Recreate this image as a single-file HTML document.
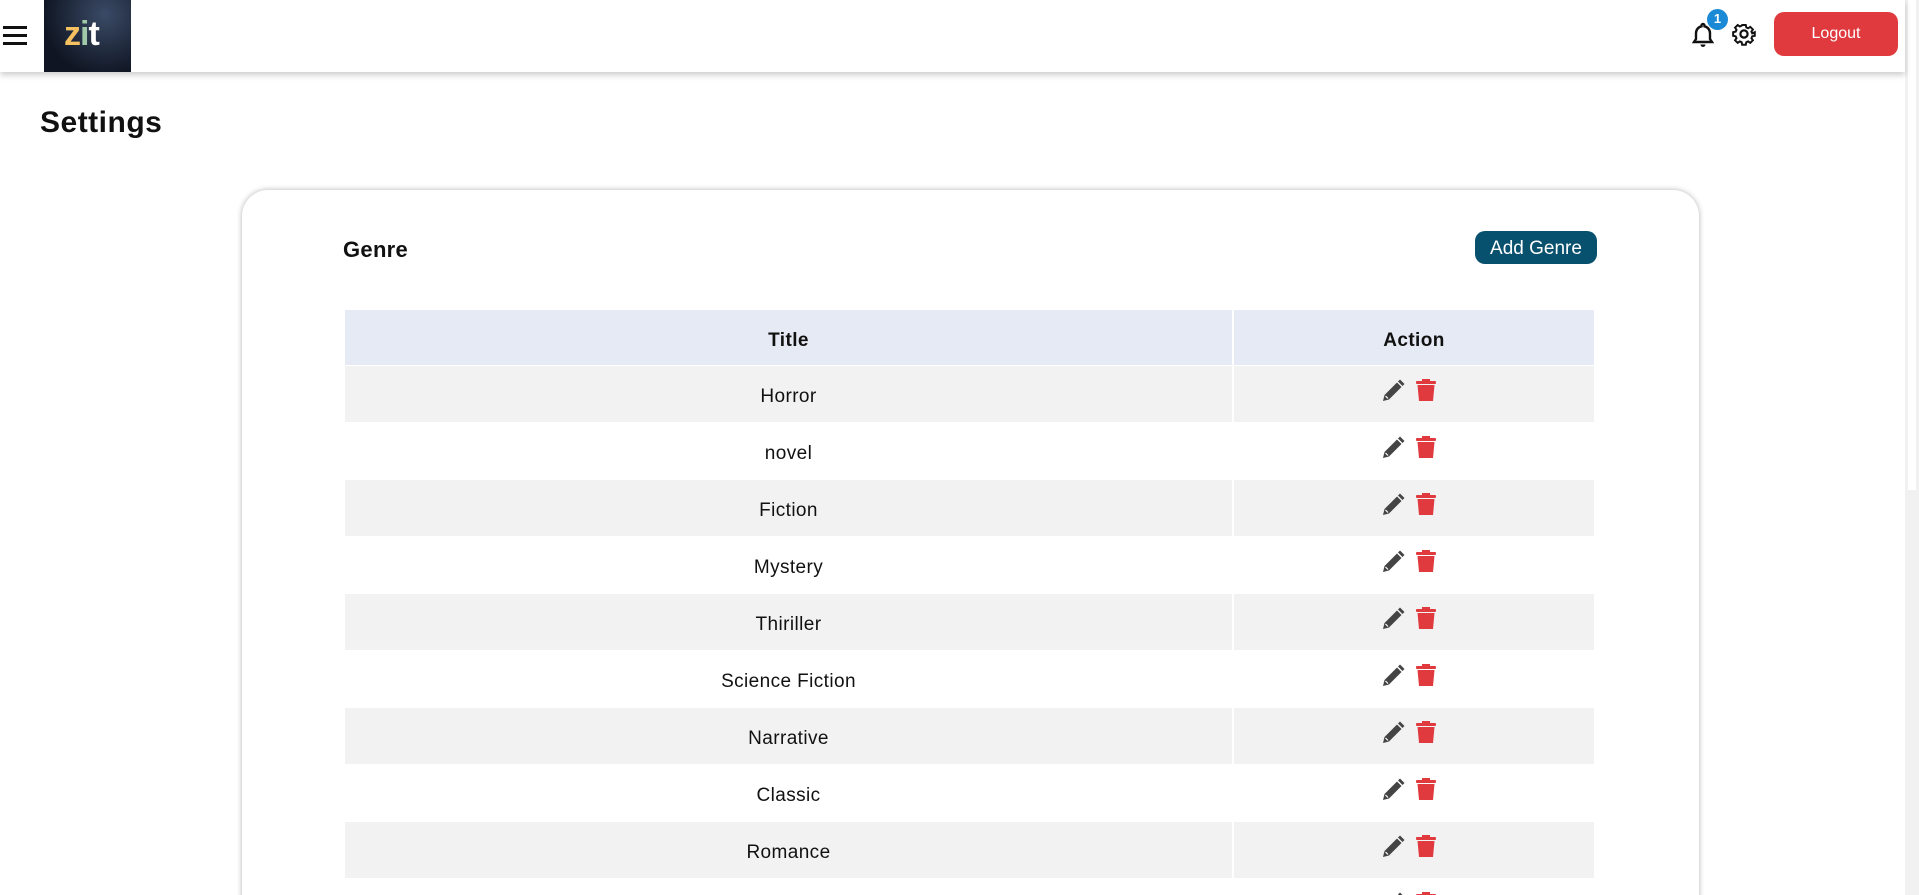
<!DOCTYPE html>
<html style="overflow:hidden;height:895px"><head><meta charset="utf-8"><style>
*{box-sizing:border-box;margin:0;padding:0}
body{width:1919px;height:895px;overflow:hidden;background:#fff;font-family:"Liberation Sans",sans-serif;position:relative;color:#111}
#wrap{position:absolute;left:0;top:0;width:1919px;height:895px;overflow:hidden}
.hdr{position:absolute;left:0;top:0;width:1905px;height:72px;background:#fff;box-shadow:0 3px 6px rgba(0,0,0,.2);z-index:2}
.sb{position:absolute;right:0;top:0;width:14px;height:895px;background:#f1f1f1}
.sb i{position:absolute;left:3px;top:0;width:8px;height:490px;background:#fff}
.logo{position:absolute;left:44px;top:0;width:87px;height:72px;background:radial-gradient(circle at 70% 20%,#3a4a66,#0f1522 75%)}
.logo span{position:absolute;left:20px;top:15px;font:bold 34px "Liberation Sans",sans-serif;color:#f4c060;letter-spacing:-1px}
.card{position:absolute;left:242px;top:190px;width:1457px;height:760px;border-radius:26px;box-shadow:0 0 6px rgba(0,0,0,.3);background:#fff}
table{position:absolute;left:345px;top:310px;width:1251px;border-collapse:collapse;font-size:19px;letter-spacing:.4px}
td,th{height:57px;text-align:center;border-right:2px solid #fff;padding-top:7px}
th{background:#e6eaf4;font-weight:600;height:55px}
tr:nth-child(even) td{background:#f2f2f2}
tr{border-bottom:1px solid #fff}
</style></head><body><div id="wrap">
<div class="hdr">
 <div style="position:absolute;left:3px;top:26px;width:24px">
  <div style="height:3px;background:#111;margin-bottom:5px"></div><div style="height:3px;background:#111;margin-bottom:5px"></div><div style="height:3px;background:#111"></div></div>
 <div class="logo"><span>z<span style="position:static;color:#9ec8a8">i</span><span style="position:static;color:#fff">t</span></span></div>
 <svg style="position:absolute;left:1692px;top:22px" width="22" height="26" viewBox="0 0 22 26"><path d="M11 2a1.5 1.5 0 0 1 1.5 1.5v.8A7 7 0 0 1 18 11v6l2 3H2l2-3v-6a7 7 0 0 1 5.5-6.7v-.8A1.5 1.5 0 0 1 11 2z" fill="none" stroke="#111" stroke-width="2.4"/><path d="M8.5 22.5a2.5 2.5 0 0 0 5 0z" fill="#111"/></svg>
 <div style="position:absolute;left:1707px;top:9px;width:21px;height:21px;border-radius:50%;background:#1a8ad6;color:#fff;font-size:13px;font-weight:bold;text-align:center;line-height:20px">1</div>
 <svg style="position:absolute;left:1732px;top:22px" width="24" height="24" viewBox="0 0 24 24"><path d="M10 2h4l.6 2.8 2 .9 2.4-1.6 2.9 2.9-1.6 2.4.9 2L24 10v4l-2.8.6-.9 2 1.6 2.4-2.9 2.9-2.4-1.6-2 .9L14 24h-4l-.6-2.8-2-.9-2.4 1.6-2.9-2.9 1.6-2.4-.9-2L0 14v-4l2.8-.6.9-2L2.1 5l2.9-2.9 2.4 1.6 2-.9z" transform="scale(.9) translate(1.3 1.3)" fill="none" stroke="#111" stroke-width="2.2"/><circle cx="12" cy="12" r="3.6" fill="none" stroke="#111" stroke-width="2.2"/></svg>
 <div style="position:absolute;left:1774px;top:12px;width:124px;height:44px;border-radius:10px;background:#e03a3e;color:#fff;font-size:16px;text-align:center;line-height:44px">Logout</div>
</div>
<div class="sb"><i></i></div>
<div style="position:absolute;left:40px;top:106px;font-size:30px;font-weight:bold;letter-spacing:.5px">Settings</div>
<div class="card"></div>
<div style="position:absolute;left:343px;top:237px;font-size:22px;font-weight:bold;letter-spacing:.3px">Genre</div>
<div style="position:absolute;left:1475px;top:231px;width:122px;height:33px;border-radius:10px;background:#07506e;color:#fff;font-size:19px;text-align:center;line-height:35px">Add Genre</div>
<table>
<tr><th>Title</th><th style="width:362px">Action</th></tr>
<tr><td>Horror</td><td>ICON</td></tr>
<tr><td>novel</td><td>ICON</td></tr>
<tr><td>Fiction</td><td>ICON</td></tr>
<tr><td>Mystery</td><td>ICON</td></tr>
<tr><td>Thiriller</td><td>ICON</td></tr>
<tr><td>Science Fiction</td><td>ICON</td></tr>
<tr><td>Narrative</td><td>ICON</td></tr>
<tr><td>Classic</td><td>ICON</td></tr>
<tr><td>Romance</td><td>ICON</td></tr>
<tr><td>Drama</td><td>ICON</td></tr>
</table>
</div>
<script>
var ic='<svg width="60" height="26" viewBox="0 0 60 26" style="vertical-align:middle;margin-top:-12px;margin-left:-8px"><path d="M3 23l1.5-6L17 4.5l4.5 4.5L9 21.5z" fill="#444"/><path d="M18 3.5l2-2 4.5 4.5-2 2z" fill="#444"/><path d="M5.5 18l2.5 2.5" stroke="#fff" stroke-width="1.2"/><rect x="36" y="3" width="20" height="3" rx="1" fill="#e03a3e"/><rect x="42" y="1" width="8" height="3" fill="#e03a3e"/><path d="M37.5 7h17l-1.5 16h-14z" fill="#e03a3e"/></svg>';
document.querySelectorAll('td').forEach(function(t){if(t.textContent=='ICON')t.innerHTML=ic;});
</script>
</body></html>
